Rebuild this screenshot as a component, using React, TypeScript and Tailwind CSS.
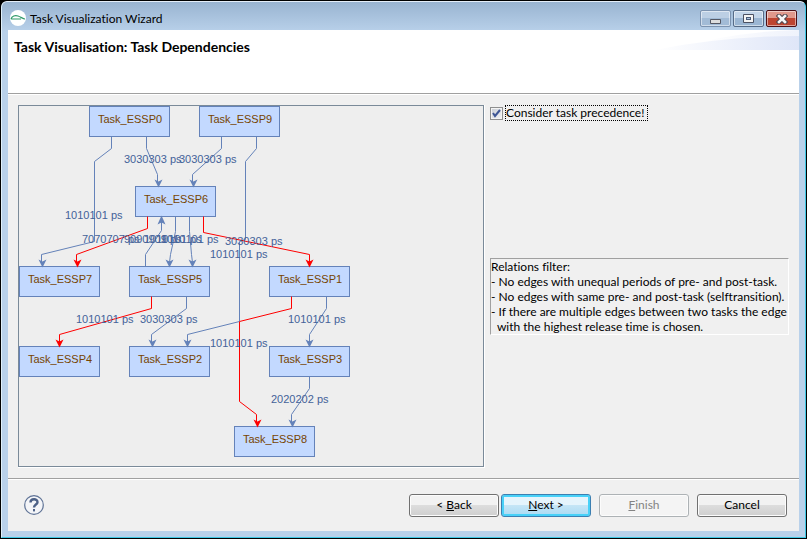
import { useState } from "react";

const NODES = [
  { id: "Task_ESSP0", x: 89, y: 106 },
  { id: "Task_ESSP9", x: 199, y: 106 },
  { id: "Task_ESSP6", x: 135, y: 186 },
  { id: "Task_ESSP7", x: 19, y: 266 },
  { id: "Task_ESSP5", x: 129, y: 266 },
  { id: "Task_ESSP1", x: 269, y: 266 },
  { id: "Task_ESSP4", x: 19, y: 346 },
  { id: "Task_ESSP2", x: 129, y: 346 },
  { id: "Task_ESSP3", x: 269, y: 346 },
  { id: "Task_ESSP8", x: 234, y: 426 },
];

const BLUE = "#6482b9";
const RED = "#ff0000";

const LINES = [
  { points: "111,136 111,148 94,161 94,241 41,254 41,262", color: BLUE },
  { points: "146,136 146,148 157,174 157,182", color: BLUE },
  { points: "221,136 221,148 192,174 192,182", color: BLUE },
  { points: "256,136 256,148 245,161 245,239 239,241 239,321", color: BLUE },
  { points: "239,321 239,401 256,414 256,422", color: RED },
  { points: "147,216 147,228 76,254 76,262", color: RED },
  { points: "145,266 145,254 161,230 161,221", color: BLUE },
  { points: "175,216 175,231 170,254 169,262", color: BLUE },
  { points: "189,216 189,231 191,254 192,262", color: BLUE },
  { points: "203,216 203,232 309,254 309,262", color: RED },
  { points: "151,296 151,308 59,334 59,342", color: RED },
  { points: "186,296 186,308 151,334 151,342", color: BLUE },
  { points: "239,321 187,334 187,342", color: BLUE },
  { points: "291,296 291,308 239,321", color: RED },
  { points: "326,296 326,308 309,334 309,342", color: BLUE },
  { points: "309,376 309,388 291,414 291,422", color: BLUE },
];

const ARROWS = [
  { x: 42, y: 266, color: BLUE },
  { x: 77, y: 266, color: RED },
  { x: 158, y: 186, color: BLUE },
  { x: 193, y: 186, color: BLUE },
  { x: 169, y: 266, color: BLUE },
  { x: 192, y: 266, color: BLUE },
  { x: 309, y: 266, color: RED },
  { x: 59, y: 346, color: RED },
  { x: 152, y: 346, color: BLUE },
  { x: 187, y: 346, color: BLUE },
  { x: 309, y: 346, color: BLUE },
  { x: 257, y: 426, color: RED },
  { x: 292, y: 426, color: BLUE },
];

const LABELS = [
  { x: 124, y: 163, text: "3030303 ps" },
  { x: 179, y: 163, text: "3030303 ps" },
  { x: 65, y: 219, text: "1010101 ps" },
  { x: 82, y: 243, text: "7070707 ps" },
  { x: 124, y: 243, text: "9090909 ps" },
  { x: 144, y: 243, text: "1010101 ps" },
  { x: 161, y: 243, text: "1010101 ps" },
  { x: 225, y: 245, text: "3030303 ps" },
  { x: 210, y: 258, text: "1010101 ps" },
  { x: 76, y: 323, text: "1010101 ps" },
  { x: 140, y: 323, text: "3030303 ps" },
  { x: 288, y: 323, text: "1010101 ps" },
  { x: 210, y: 347, text: "1010101 ps" },
  { x: 271, y: 403, text: "2020202 ps" },
];

function TaskGraph() {
  return (
    <svg
      width="464"
      height="360"
      viewBox="19 106 464 360"
      className="block font-['Liberation_Sans',Arial,sans-serif] text-[11px]"
      role="img"
      aria-label="Task dependencies"
    >
      <g transform="translate(0.5 0.5)">
        {NODES.map((n) => (
          <rect key={n.id} x={n.x} y={n.y} width="80" height="30" fill="#c3d9ff" stroke={BLUE} />
        ))}
        {LINES.map((l) => (
          <polyline key={l.points} points={l.points} fill="none" stroke={l.color} />
        ))}
        {ARROWS.map((a) => (
          <path
            key={`${a.x}-${a.y}`}
            transform={`translate(${a.x} ${a.y})`}
            d="M0 1 L-4 -7 L0 -5 L4 -7 Z"
            fill={a.color}
          />
        ))}
        <path d="M161 215 L157 224 L161 222 L165 224 Z" fill={BLUE} />
      </g>
      {NODES.map((n) => (
        <text key={n.id} x={n.x + 41} y={n.y + 17} textAnchor="middle" fill="#774400">
          {n.id}
        </text>
      ))}
      {LABELS.map((l) => (
        <text key={`${l.x}-${l.y}`} x={l.x} y={l.y} fill="#446299">
          {l.text}
        </text>
      ))}
    </svg>
  );
}

function TitleBar() {
  const frame =
    "flex h-[17px] w-[31px] items-center justify-center rounded-[2px] border shadow-[inset_0_0_0_1px_rgba(255,255,255,0.5)]";
  return (
    <header className="flex h-[28px] items-center gap-1 pl-[2px]">
      <svg width="16" height="16" viewBox="0 0 16 16" className="mt-1" aria-hidden="true">
        <circle cx="8" cy="8" r="8" fill="#fff" />
        <path
          d="M1 9 C2 6 5 5 8 6 C11 7 13 9 15 9 M1 9 H11"
          fill="none"
          stroke="#2f9a68"
          strokeWidth="1.2"
        />
      </svg>
      <h1 className="mt-[5px] grow text-xs leading-4">Task Visualization Wizard</h1>
      <div className="mr-[2px] flex gap-[2px] pt-[5px]">
        <button
          type="button"
          aria-label="Minimize"
          className={`${frame} border-[#7c93b0] bg-linear-to-b from-[#bccfe4] from-50% to-[#a2bbd6] to-50%`}
        >
          <svg width="13" height="13" viewBox="0 0 13 13">
            <rect x="1" y="7" width="11" height="5" rx="1" fill="#555864" />
            <rect x="2" y="8" width="9" height="3" fill="#ddd" />
          </svg>
        </button>
        <button
          type="button"
          aria-label="Maximize"
          className={`${frame} border-[#566b87] bg-linear-to-b from-[#c3d5e9] from-50% to-[#9bb6d3] to-50%`}
        >
          <svg width="11" height="9" viewBox="0 0 11 9">
            <rect width="11" height="9" rx="1" fill="#4c5162" />
            <rect x="1" y="1" width="9" height="7" fill="#f4f4f4" />
            <rect x="3" y="3" width="5" height="3" fill="#4c5b78" />
            <rect x="4" y="4" width="3" height="1" fill="#a9c3de" />
          </svg>
        </button>
        <button
          type="button"
          aria-label="Close"
          className={`${frame} border-[#4c1016] bg-linear-to-b from-[#e0998c] from-50% to-[#bd4531] to-50%`}
        >
          <svg width="12" height="10" viewBox="0 0 12 10">
            <path d="M3 2 L9 8 M9 2 L3 8" stroke="#50474f" strokeWidth="4.6" strokeLinecap="square" />
            <path d="M3 2 L9 8 M9 2 L3 8" stroke="#f6f6f6" strokeWidth="2.6" strokeLinecap="square" />
          </svg>
        </button>
      </div>
    </header>
  );
}

export default function App() {
  const [precedence, setPrecedence] = useState(true);
  const plain =
    "h-[23px] w-[90px] rounded-[3px] border border-[#707070] bg-linear-to-b from-[#f2f2f2] from-50% via-[#dddddd] via-50% to-[#cfcfcf] leading-4 shadow-[inset_0_0_0_1px_#fcfcfc]";
  return (
    <div className="flex min-h-screen bg-black font-[Lato,'Segoe_UI',sans-serif] text-xs text-black [font-variant-ligatures:none]">
      <div className="m-px flex grow flex-col rounded-t-[6px] border border-t-[#e4eef9] border-r-[#3fc8e4] border-b-[#3fc8e4] border-l-[#e0f0fa] bg-[#b9d1ea] bg-linear-to-b from-[#99b4d1] to-[#b9d1ea] to-[30px] px-[6px] pb-[6px]">
        <TitleBar />
        <section className="flex h-[63px] justify-between bg-white">
          <h2 className="pt-[9px] pl-[6px] text-sm leading-4 font-bold">
            Task Visualisation: Task Dependencies
          </h2>
          <svg width="145" height="20" viewBox="0 0 145 20" aria-hidden="true">
            <defs>
              <linearGradient id="swoosh">
                <stop offset="0" stopColor="#fff" />
                <stop offset="1" stopColor="#dfe6f8" />
              </linearGradient>
            </defs>
            <path d="M60 9 Q100 1 145 0 V8 Q90 8 50 12 Z" fill="url(#swoosh)" opacity="0.5" />
            <path d="M0 20 Q70 6 145 6 V20 Z" fill="url(#swoosh)" />
          </svg>
        </section>
        <main className="flex grow gap-[5px] border-t border-[#a0a0a0] bg-[#f0f0f0] p-[10px] pt-[11px] shadow-[inset_0_1px_0_#fff]">
          <div className="min-w-0 grow border-r border-b border-white">
            <div className="h-full overflow-hidden border border-[#7a8a99] bg-[#eeeeee]">
              <TaskGraph />
            </div>
          </div>
          <div className="w-[299px] shrink-0">
            <div className="flex h-4 items-center gap-[2px]">
              <span className="relative flex">
                <input
                  id="precedence"
                  type="checkbox"
                  checked={precedence}
                  onChange={(e) => setPrecedence(e.target.checked)}
                  className="size-[13px] appearance-none border border-[#8e8f8f] bg-linear-to-br from-[#c8cdd4] to-[#f3f4f6] shadow-[inset_0_0_0_1px_#f4f4f4]"
                />
                {precedence && (
                  <svg
                    width="13"
                    height="13"
                    viewBox="0 0 13 13"
                    className="pointer-events-none absolute inset-0"
                    aria-hidden="true"
                  >
                    <path d="M3 6 L5 9 L10 3" fill="none" stroke="#3f5795" strokeWidth="2" />
                  </svg>
                )}
              </span>
              <label
                htmlFor="precedence"
                className="h-4 border border-dotted border-black pr-[3px] leading-[14px]"
              >
                Consider task precedence!
              </label>
            </div>
            <div className="mt-[137px] border border-t-[#a0a0a0] border-r-white border-b-white border-l-[#a0a0a0] leading-[15px] whitespace-pre">
              <p>Relations filter:</p>
              <p>- No edges with unequal periods of pre- and post-task.</p>
              <p>- No edges with same pre- and post-task (selftransition).</p>
              <p>- If there are multiple edges between two tasks the edge</p>
              <p>{"  with the highest release time is chosen."}</p>
            </div>
          </div>
        </main>
        <footer className="flex h-[53px] items-center border-t border-[#a0a0a0] bg-[#f0f0f0] pr-[12px] pl-[16px] shadow-[inset_0_1px_0_#fff]">
          <button type="button" aria-label="Help" className="mr-auto">
            <svg width="20" height="20" viewBox="0 0 20 20">
              <circle cx="10" cy="10" r="9.3" fill="#f4f5f8" stroke="#5f7396" strokeWidth="1.2" />
              <path
                d="M6.5 7.5 C6.5 3.3 13.5 3.3 13.5 7.2 C13.5 9.6 10 9.6 10 12.6"
                fill="none"
                stroke="#4d6187"
                strokeWidth="2.4"
              />
              <rect x="9" y="14" width="2" height="2.4" fill="#4d6187" />
            </svg>
          </button>
          <div className="flex gap-[8px]">
            <div className="flex gap-[2px]">
              <button type="button" className={plain}>
                &lt; <u>B</u>ack
              </button>
              <button
                type="button"
                className="h-[23px] w-[90px] rounded-[3px] border border-[#3c7fb1] bg-linear-to-b from-[#e5f4fc] from-50% via-[#c4e5f6] via-50% to-[#a9daf3] leading-4 shadow-[inset_0_0_0_2px_#48d1f8]"
              >
                <u>N</u>ext &gt;
              </button>
            </div>
            <button
              type="button"
              disabled
              className="h-[23px] w-[90px] rounded-[3px] border border-[#adb2b5] bg-[#f4f4f4] leading-4 text-[#838383] shadow-[inset_0_0_0_1px_#fcfcfc]"
            >
              <u>F</u>inish
            </button>
            <button type="button" className={plain}>
              Cancel
            </button>
          </div>
        </footer>
      </div>
    </div>
  );
}
